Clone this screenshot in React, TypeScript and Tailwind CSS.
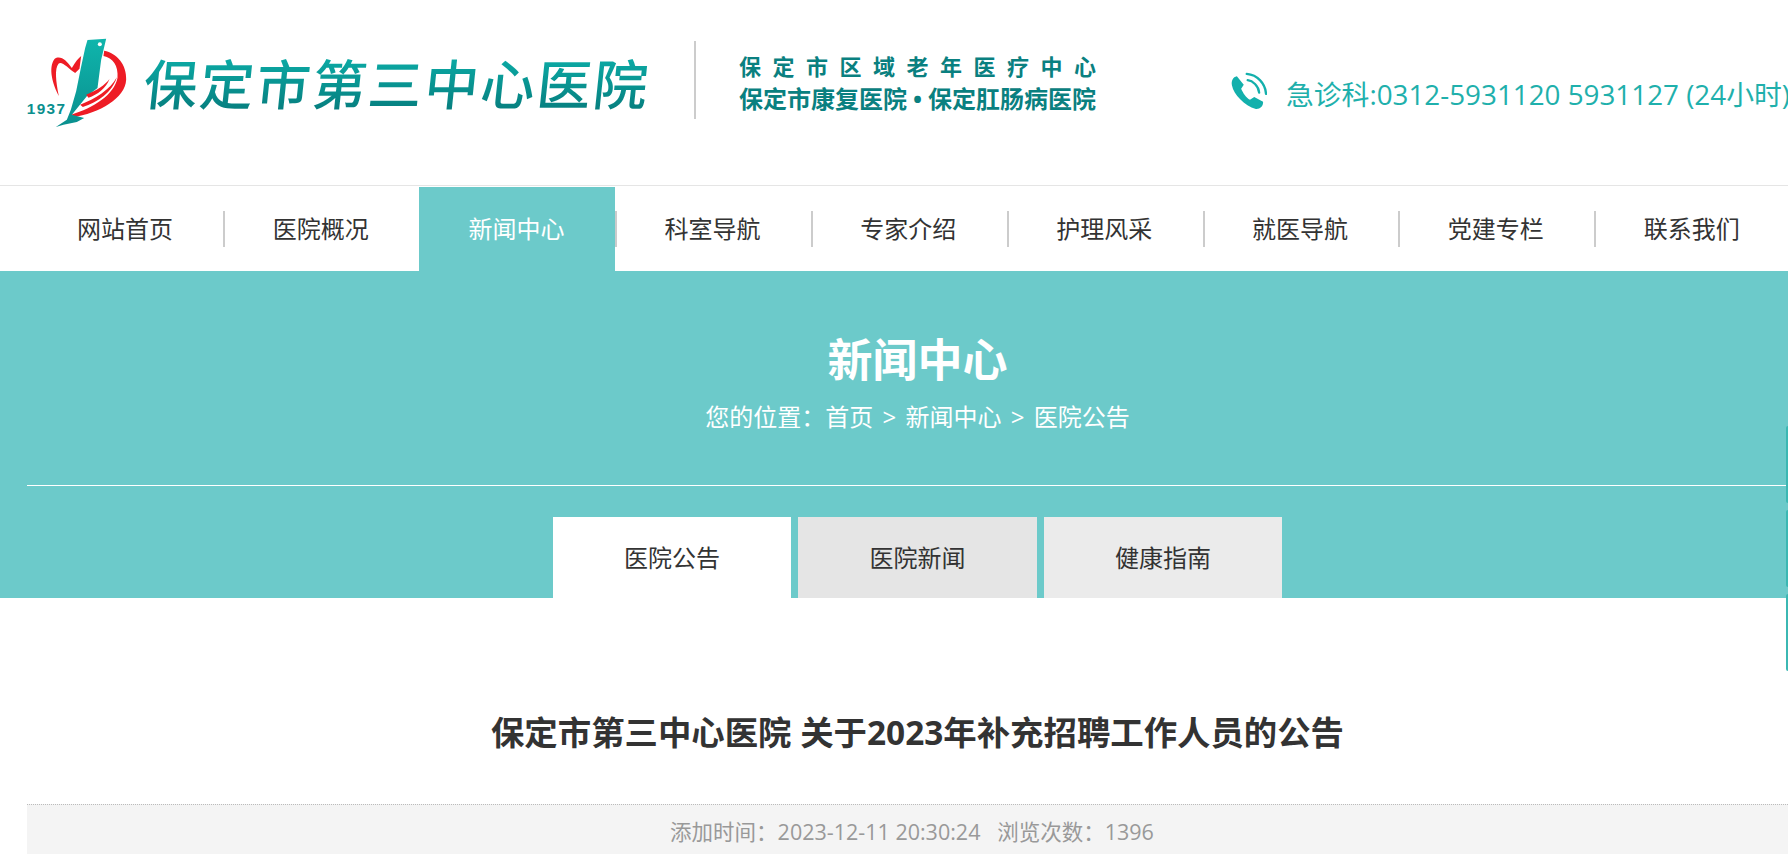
const navItems = ['网站首页', '医院概况', '新闻中心', '科室导航', '专家介绍', '护理风采', '就医导航', '党建专栏', '联系我们'];

function LogoMark() {
  return (
    <svg viewBox="48 40 305 270" className="mt-[38px] h-[90px] w-[102px] shrink-0">
      <defs>
        <linearGradient id="blade" x1="0" y1="0" x2="0" y2="1">
          <stop offset="0" stopColor="#0fb5ac" />
          <stop offset="1" stopColor="#0a8f8e" />
        </linearGradient>
      </defs>
      <path d="M146 214C128 180 113 130 133 103C150 90 170 108 185 130C195 113 205 100 213 94L208 132L195 145C175 132 155 108 145 117C133 132 137 170 146 214Z" fill="#ee1c25" />
      <path d="M282 78C320 85 350 120 348 165C345 220 270 265 185 278L183 270C250 250 312 210 322 160C325 122 308 100 280 94Z" fill="#ee1c25" />
      <path d="M232 46L288 42L273 105L262 190L230 215L185 270L222 280L200 292L160 300L137 307L170 285L182 255L198 200L212 130L225 70Z" fill="url(#blade)" />
      <circle cx="269" cy="59" r="6" fill="#fff" />
      <path d="M228 210C260 198 285 180 298 163C287 192 262 210 235 219Z" fill="#ee1c25" />
      <path d="M210 240C255 223 300 195 320 158C307 202 262 234 218 247Z" fill="#ee1c25" />
      <text x="50" y="267" fill="#0a8f8e" fontFamily="Liberation Sans" fontSize="46" fontWeight="700" letterSpacing="4">1937</text>
    </svg>
  );
}

function PhoneIcon() {
  return (
    <svg viewBox="64 38 110 114" className="mt-[72px] ml-[135px] h-[38px] w-[36px] shrink-0">
      <path d="M82 50C70 52 64 65 67 78C72 105 105 140 140 150C152 151 163 142 162 128L135 113L122 122C110 115 100 100 95 88L103 76Z" fill="#13b0ac" />
      <path d="M115 62C130 64 148 78 150 100" fill="none" stroke="#13b0ac" strokeWidth="7" strokeLinecap="round" />
      <path d="M112 43C145 46 169 72 171 104" fill="none" stroke="#13b0ac" strokeWidth="7" strokeLinecap="round" />
    </svg>
  );
}

export default function App() {
  return (
    <div className="relative h-screen overflow-hidden bg-white font-['Open_Sans','Noto_Sans_CJK_SC',sans-serif] text-[#333]">
      {/* Header */}
      <header className="flex h-[186px] border-b border-[#e5e5e5] pl-[26px]">
        <LogoMark />
        <div className="mt-[51px] ml-[16px] h-[66px] w-[505px] shrink-0 whitespace-nowrap bg-gradient-to-b from-[#0cb0aa] to-[#06797a] bg-clip-text text-[54px] leading-[66px] font-medium tracking-[2.2px] text-transparent -skew-x-6">
          保定市第三中心医院
        </div>
        <div className="mt-[41px] ml-[45px] h-[78px] w-[2px] shrink-0 bg-[#ccc]" />
        <div className="mt-[50px] ml-[43px] w-[357px] shrink-0 font-bold text-[#0a8080]">
          <div className="whitespace-nowrap text-[22px] leading-[32px] tracking-[11.5px]">保定市区域老年医疗中心</div>
          <div className="flex justify-between whitespace-nowrap text-[24px] leading-[34px]">
            <span>保定市康复医院</span>
            <span>•</span>
            <span>保定肛肠病医院</span>
          </div>
        </div>
        <PhoneIcon />
        <div className="mt-[74px] ml-[19px] whitespace-nowrap text-[27.8px] leading-[40px] text-[#1fb0ac]">
          急诊科:0312-5931120 5931127 (24小时)
        </div>
      </header>

      {/* Nav */}
      <nav className="mt-px ml-[27px] flex h-[84px] w-[1764px]">
        {navItems.map((item, i) => (
          <div key={item} className="flex w-[195.85px] shrink-0 items-center">
            <div className={i === 2 ? 'flex h-full w-[195.85px] shrink-0 items-center justify-center bg-[#6ccaca] text-[24px] text-white' : 'flex h-full w-[195.85px] shrink-0 items-center justify-center text-[24px]'}>
              {item}
            </div>
            {i !== 1 && i !== 8 && <div className="mr-[-2.5px] ml-[0.5px] h-[36px] w-[2px] shrink-0 bg-[#ccc]" />}
          </div>
        ))}
      </nav>

      {/* Banner */}
      <section className="h-[327px] bg-[#6ccaca] pt-[59px] pl-[27px] text-white">
        <div className="w-[1781px]">
          <h1 className="text-center text-[45px] leading-[60px] font-bold">新闻中心</h1>
          <p className="mt-[7px] text-center text-[24px] leading-[40px]">
            您的位置：首页 <span className="mx-[3px]">&gt;</span> 新闻中心 <span className="mx-[3px]">&gt;</span> 医院公告
          </p>
          <div className="mt-[48px] h-px bg-white" />
          <div className="mt-[31px] flex h-[81px] justify-center gap-[7px] text-[24px] text-[#333]">
            <div className="flex w-[238px] items-center justify-center bg-white">医院公告</div>
            <div className="flex w-[239px] items-center justify-center bg-[#e5e5e5]">医院新闻</div>
            <div className="flex w-[238px] items-center justify-center bg-[#ebebeb]">健康指南</div>
          </div>
        </div>
      </section>

      {/* Article */}
      <main className="ml-[27px] w-[1781px] pt-[110px]">
        <h2 className="text-center text-[33.4px] leading-[48px] font-bold">保定市第三中心医院 关于2023年补充招聘工作人员的公告</h2>
        <div className="mt-[48px] border-t border-dotted border-[#bbb] bg-[#f4f4f4] pr-[11px] text-center text-[21.5px] leading-[53px] text-[#999]">
          添加时间：2023-12-11 20:30:24 &nbsp; 浏览次数：1396
        </div>
      </main>

      {/* Side tabs poking in from the right edge */}
      <div className="absolute top-[426px] right-0 h-[77px] w-[2px] rounded-l-sm bg-[#3bb8b3]" />
      <div className="absolute top-[510px] right-0 h-[77px] w-[2px] rounded-l-sm bg-[#3bb8b3]" />
      <div className="absolute top-[594px] right-0 h-[77px] w-[2px] rounded-l-sm bg-[#3bb8b3]" />
    </div>
  );
}
